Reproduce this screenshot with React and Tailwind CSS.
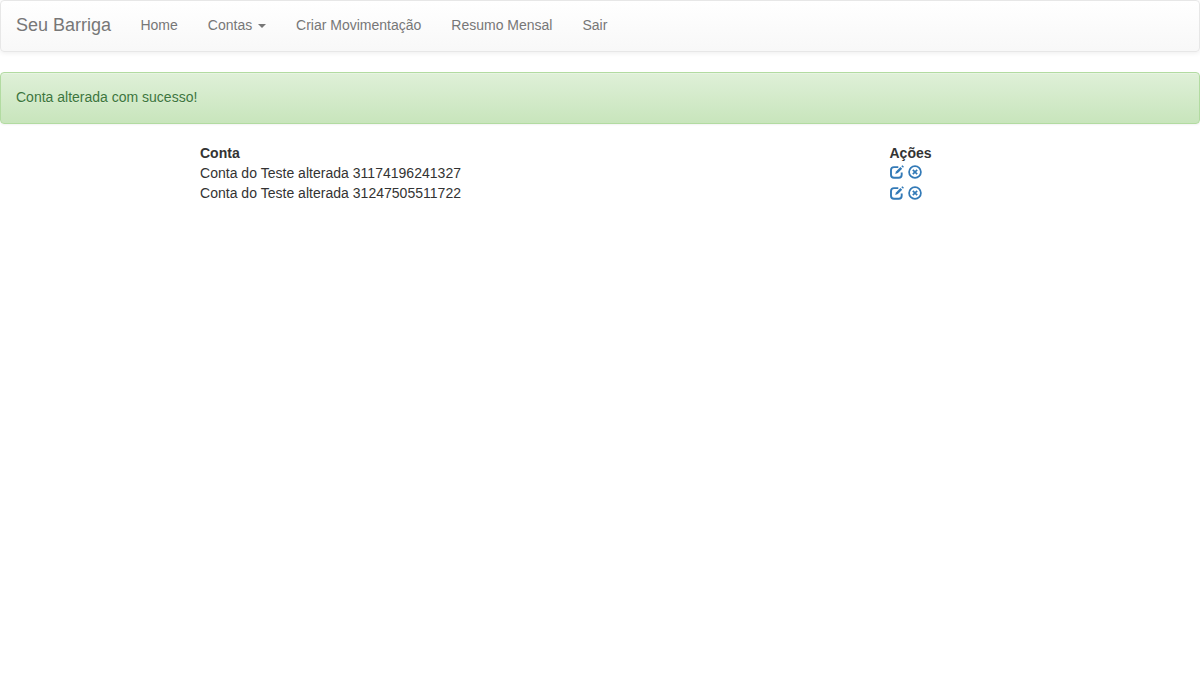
const NAV_LINK = "block px-[15px] pt-[14px] pb-4 leading-5";

function EditIcon() {
  return (
    <svg width="14" height="14" viewBox="0 0 14 14" className="block" fill="none" aria-hidden="true">
      <path d="M8.3 2.1H4Q1 2.1 1 5.1V9.7Q1 12.7 4 12.7H8.7Q11.7 12.7 11.7 9.7V7.6" stroke="currentColor" strokeWidth="1.9" />
      <path d="M5.2 9.1L6 6.4L10.4 2.1L12.2 3.8L7.9 8.1Z" fill="currentColor" />
      <path d="M11.3 1.2L12.1 0.5Q12.4 0.2 12.7 0.5L13.7 1.5Q14 1.8 13.7 2.1L13 2.8Z" fill="currentColor" />
    </svg>
  );
}

function RemoveCircleIcon() {
  return (
    <svg width="14" height="14" viewBox="0 0 14 14" className="block" fill="none" stroke="currentColor" aria-hidden="true">
      <circle cx="7" cy="7" r="5.9" strokeWidth="1.75" />
      <path d="M4.8 4.8L9.2 9.2M9.2 4.8L4.8 9.2" strokeWidth="1.65" />
    </svg>
  );
}

const accounts = [
  { name: "Conta do Teste alterada 31174196241327", iconPadding: "pt-[2px]" },
  { name: "Conta do Teste alterada 31247505511722", iconPadding: "pt-[3px]" },
];

export default function App() {
  return (
    <div className="min-h-[680px] bg-white font-['Liberation_Sans',Arial,sans-serif] text-[14px] leading-5 text-[#333]">
      <nav className="mb-5 flex h-[52px] rounded border border-[#e7e7e7] bg-linear-to-b from-white to-[#f8f8f8] text-[#777] shadow-[inset_0_1px_0_rgba(255,255,255,0.15),0_1px_5px_rgba(0,0,0,0.075)] [text-shadow:0_1px_0_rgba(255,255,255,0.25)]">
        <a href="#" className="block pt-[14px] pr-[14.4px] pb-4 pl-[15px] text-[18px] leading-5">Seu Barriga</a>
        <a href="#" className={NAV_LINK}>Home</a>
        <a href="#" className={NAV_LINK}>
          Contas <span className="ml-[2px] inline-block border-x-4 border-t-4 border-x-transparent border-t-[#777] align-middle" />
        </a>
        <a href="#" className={NAV_LINK}>Criar Movimentação</a>
        <a href="#" className={NAV_LINK}>Resumo Mensal</a>
        <a href="#" className={NAV_LINK}>Sair</a>
      </nav>
      <div className="mb-[19px] h-[52px] rounded border border-[#b2dba1] bg-linear-to-b from-[#dff0d8] to-[#c8e5bc] px-[15px] pt-[14px] pb-4 text-[#3c763d] shadow-[inset_0_1px_0_rgba(255,255,255,0.25),0_1px_2px_rgba(0,0,0,0.05)] [text-shadow:0_1px_0_rgba(255,255,255,0.2)]">
        Conta alterada com sucesso!
      </div>
      <table className="mx-auto w-[800px] table-fixed border-collapse">
        <thead>
          <tr>
            <th className="w-[689px] p-0 text-left font-bold">Conta</th>
            <th className="p-0 pl-[0.5px] text-left font-bold">Ações</th>
          </tr>
        </thead>
        <tbody>
          {accounts.map(({ name, iconPadding }) => (
            <tr key={name}>
              <td className="p-0 tracking-[0.02px]">{name}</td>
              <td className="p-0 pl-[0.5px] text-[#337ab7]">
                <div className={`flex h-5 items-start gap-[4px] ${iconPadding}`}>
                  <a href="#" aria-label="Editar"><EditIcon /></a>
                  <a href="#" aria-label="Remover"><RemoveCircleIcon /></a>
                </div>
              </td>
            </tr>
          ))}
        </tbody>
      </table>
    </div>
  );
}
